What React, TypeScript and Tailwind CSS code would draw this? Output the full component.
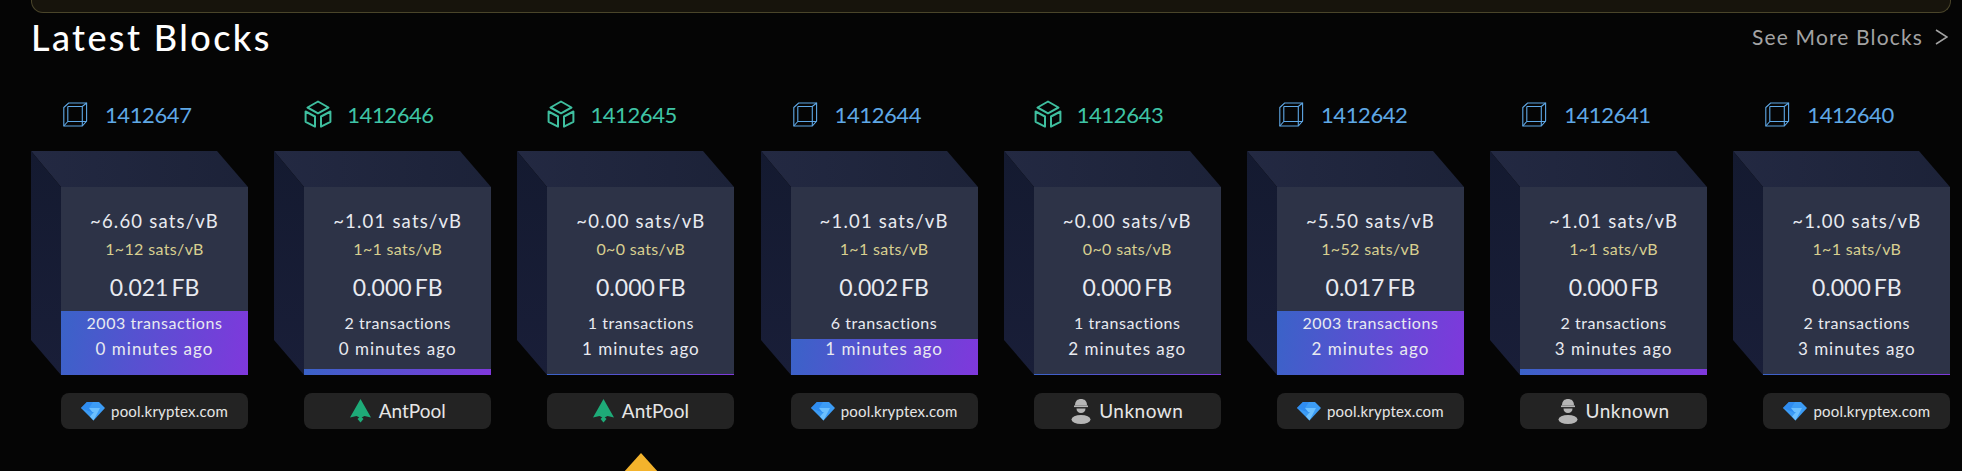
import React from "react";

type Block = {
  height: number;
  mined: boolean;
  median: string;
  range: string;
  size: string;
  txs: string;
  age: string;
  fill: string;
  pool: "kryptex" | "ant" | "unknown";
};

const blocks: Block[] = [
  { height: 1412647, mined: false, median: "~6.60", range: "1~12", size: "0.021", txs: "2003", age: "0", fill: "h-[64px]", pool: "kryptex" },
  { height: 1412646, mined: true, median: "~1.01", range: "1~1", size: "0.000", txs: "2", age: "0", fill: "h-[6px]", pool: "ant" },
  { height: 1412645, mined: true, median: "~0.00", range: "0~0", size: "0.000", txs: "1", age: "1", fill: "h-[1px]", pool: "ant" },
  { height: 1412644, mined: false, median: "~1.01", range: "1~1", size: "0.002", txs: "6", age: "1", fill: "h-[36px]", pool: "kryptex" },
  { height: 1412643, mined: true, median: "~0.00", range: "0~0", size: "0.000", txs: "1", age: "2", fill: "h-[1px]", pool: "unknown" },
  { height: 1412642, mined: false, median: "~5.50", range: "1~52", size: "0.017", txs: "2003", age: "2", fill: "h-[64px]", pool: "kryptex" },
  { height: 1412641, mined: false, median: "~1.01", range: "1~1", size: "0.000", txs: "2", age: "3", fill: "h-[6px]", pool: "unknown" },
  { height: 1412640, mined: false, median: "~1.00", range: "1~1", size: "0.000", txs: "2", age: "3", fill: "h-[1px]", pool: "kryptex" },
];

function WireCube() {
  return (
    <svg width="25" height="25" viewBox="0 0 25 25" fill="none" stroke="#5fa8e6" strokeWidth="1.1" className="shrink-0">
      <path d="M.8 5.500L5.600 1h18v18l-4.300 5H.8z" />
      <path d="M4.800 4.500h14.500v19.500M19.300 4.500l4.300-3.500" />
      <path d="M4.800 4.500v15h18.800M4.800 19.500L.8 24" />
    </svg>
  );
}

function SolidCube() {
  return (
    <svg width="28" height="28" viewBox="0 0 28 28" fill="none" stroke="#3fbf9f" strokeWidth="2" strokeLinejoin="round" className="shrink-0">
      <path d="M14 1.500L24.500 7.500 14 13.300 3.500 7.500z" />
      <path d="M1.600 11.500v10.300l9.400 4.800V16.500zM26.400 11.500v10.300l-9.400 4.800V16.500z" />
    </svg>
  );
}

function PoolIcon({ pool }: { pool: Block["pool"] }) {
  if (pool === "kryptex") {
    return (
      <svg width="24" height="20" viewBox="0 0 24 20" className="shrink-0">
        <path d="M6 1h12l6 6-11.500 12.400L0 7z" fill="#3c9cf5" />
        <path d="M5 7h14l-6.500 12.400-3.500-3.800 4-4.600H9.500z" fill="#6cc0ff" />
        <path d="M0 7l6-6h6l-4 6 4 5z" fill="#2f8cf0" />
      </svg>
    );
  }
  if (pool === "ant") {
    return (
      <svg width="21" height="24" viewBox="0 0 21 24" className="shrink-0">
        <path d="M10.500 0L21 18.500l-6.500-1.500-4 2-4-2L0 18.500z" fill="#1eab78" />
        <path d="M10.500 17l3 3-3 3.600-3-3.600z" fill="#1eab78" />
      </svg>
    );
  }
  return (
    <svg width="20" height="26" viewBox="0 0 20 26" className="shrink-0">
      <path d="M4 7.500C4 3 6.500 1 10 1s6 2 6 6.500z" fill="#b5b5b5" />
      <rect x="3" y="7.500" width="14" height="1.600" fill="#b5b5b5" />
      <path d="M5.500 10.500h9c0 2.800-1.800 4.600-4.500 4.600S5.500 13.300 5.500 10.500z" fill="#b5b5b5" />
      <ellipse cx="10" cy="21.500" rx="9.500" ry="4.500" fill="#b5b5b5" />
    </svg>
  );
}

function PoolPill({ pool }: { pool: Block["pool"] }) {
  return (
    <div className="ml-[30px] mt-[18px] flex h-[36px] w-[187px] items-center justify-center gap-[6px] rounded-lg bg-[#232323] text-[#e6e6e6]">
      <PoolIcon pool={pool} />
      {pool === "kryptex" && <span className="text-[15px] tracking-[0.2px]">pool.kryptex.com</span>}
      {pool === "ant" && <span className="ml-[2px] text-[19px]">AntPool</span>}
      {pool === "unknown" && <span className="ml-[2px] text-[19px] tracking-[0.5px]">Unknown</span>}
    </div>
  );
}

function BlockCube({ block }: { block: Block }) {
  return (
    <div className="relative h-[224px] w-[217px] pl-[30px] pt-[36px]">
      <svg width="217" height="224" viewBox="0 0 217 224" className="absolute left-0 top-0">
        <defs>
          <linearGradient id="topFace" x1="0" y1="0" x2="1" y2="0">
            <stop offset="0" stopColor="#232942" />
            <stop offset="1" stopColor="#1c2238" />
          </linearGradient>
          <linearGradient id="sideFace" x1="0" y1="0" x2="0" y2="1">
            <stop offset="0" stopColor="#141a30" />
            <stop offset="1" stopColor="#191e38" />
          </linearGradient>
        </defs>
        <path d="M0 0h186l31 36H30z" fill="url(#topFace)" />
        <path d="M0 0l30 36v188L0 189z" fill="url(#sideFace)" />
      </svg>
      <div className="relative flex h-[188px] w-[187px] flex-col items-center overflow-hidden bg-[#2d3347] text-[#e8eaf0]">
        <div className={"absolute inset-x-0 bottom-0 bg-[linear-gradient(100deg,#3a63c8,#7f38dc)] " + block.fill} />
        <div className="relative mt-[22px] text-[18.5px] leading-[24px] tracking-[1.2px]">{block.median} sats/vB</div>
        <div className="relative mt-[4px] text-[16px] leading-[24px] tracking-[0.35px] text-[#d8cf90]">{block.range} sats/vB</div>
        <div className="relative mt-[10px] flex gap-[3px] text-[23px] leading-[32px]">
          <span>{block.size}</span>
          <span>FB</span>
        </div>
        <div className="relative mt-[8px] text-[16px] leading-[24px] tracking-[0.55px]">{block.txs} transactions</div>
        <div className="relative mt-[2px] text-[17px] leading-[24px] tracking-[1px]">{block.age} minutes ago</div>
      </div>
    </div>
  );
}

export default function App() {
  return (
    <div className="h-[471px] w-[1962px] overflow-hidden bg-[#050505] pl-[31px] font-['Lato','Noto_Sans',sans-serif]">
      <div className="h-[13px] w-[1920px] rounded-b-xl border border-t-0 border-[#4a452a] bg-[#17140c]" />
      <div className="flex h-[48px] w-[1920px] items-center justify-between">
        <h1 className="text-[36px] font-medium leading-none tracking-[2.4px] text-white">Latest Blocks</h1>
        <a className="flex items-center gap-[12px] text-[21px] tracking-[1.15px] text-[#a3a3a3]">
          See More Blocks
          <svg width="13" height="16" viewBox="0 0 13 16" fill="none" stroke="#a3a3a3" strokeWidth="1.500" className="mr-[3px] shrink-0">
            <path d="M1 1l11 7-11 7" />
          </svg>
        </a>
      </div>
      <div className="flex gap-[26.2px]">
        {blocks.map((block, i) => (
          <div key={block.height} className="w-[217px] shrink-0">
            <div className={"flex h-[90px] items-center pt-[16px] text-[22px] tracking-[-0.4px] " + (block.mined ? "gap-[15px] pl-[30px] text-[#3fc4a6]" : "gap-[17px] pl-[32px] text-[#5fa8e6]")}>
              {block.mined ? <SolidCube /> : <WireCube />}
              <span>{block.height}</span>
            </div>
            <BlockCube block={block} />
            <PoolPill pool={block.pool} />
            {i === 2 && (
              <div className="ml-[30px] mt-[24px] flex w-[187px] justify-center">
                <svg width="36" height="20" viewBox="0 0 36 20">
                  <path d="M18 0l18 20H0z" fill="#f3b32c" />
                </svg>
              </div>
            )}
          </div>
        ))}
      </div>
    </div>
  );
}
